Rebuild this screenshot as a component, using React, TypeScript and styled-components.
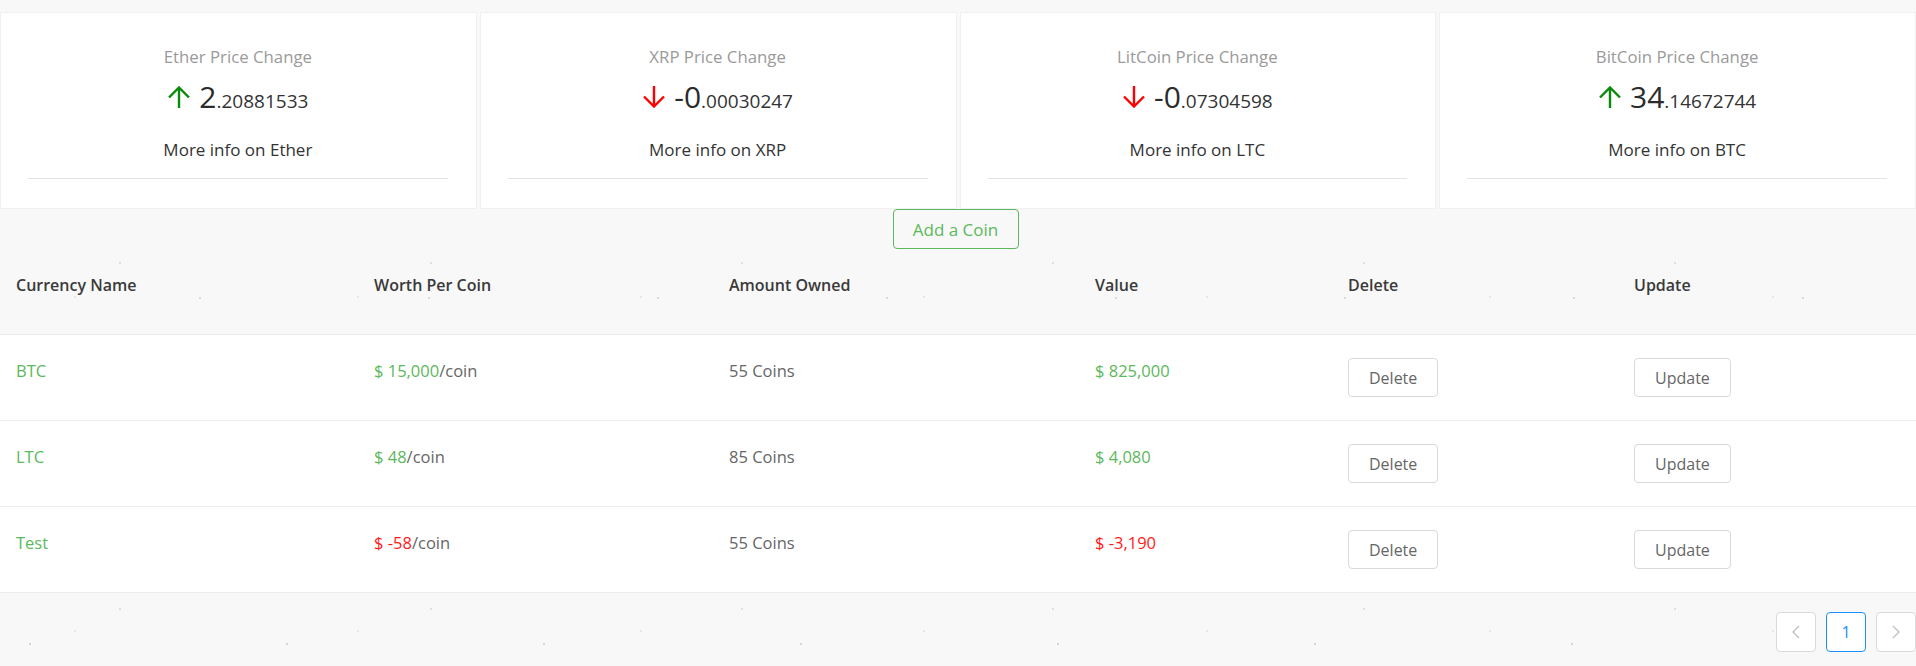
import React from 'react';
import styled, { createGlobalStyle } from 'styled-components';

const GlobalStyle = createGlobalStyle`
  body {
    margin: 0;
    font-family: 'Open Sans', 'Noto Sans', sans-serif;
    background-color: #f8f8f8;
    background-image:
      radial-gradient(circle at 30px 40px, rgba(0, 0, 0, 0.14) 0.8px, transparent 1.4px),
      radial-gradient(circle at 120px 90px, rgba(0, 0, 0, 0.1) 0.8px, transparent 1.4px),
      radial-gradient(circle at 200px 20px, rgba(0, 0, 0, 0.12) 0.8px, transparent 1.4px),
      radial-gradient(circle at 75px 130px, rgba(0, 0, 0, 0.08) 0.8px, transparent 1.4px);
    background-size: 257px 151px, 311px 173px, 229px 139px, 283px 167px;
  }
`;

type Trend = 'up' | 'down';

interface PriceCard {
  title: string;
  trend: Trend;
  int: string;
  dec: string;
  short: string;
}

interface CoinRow {
  name: string;
  worth: number;
  amount: number;
}

const cards: PriceCard[] = [
  { title: 'Ether Price Change', trend: 'up', int: '2', dec: '.20881533', short: 'Ether' },
  { title: 'XRP Price Change', trend: 'down', int: '-0', dec: '.00030247', short: 'XRP' },
  { title: 'LitCoin Price Change', trend: 'down', int: '-0', dec: '.07304598', short: 'LTC' },
  { title: 'BitCoin Price Change', trend: 'up', int: '34', dec: '.14672744', short: 'BTC' },
];

const coins: CoinRow[] = [
  { name: 'BTC', worth: 15000, amount: 55 },
  { name: 'LTC', worth: 48, amount: 85 },
  { name: 'Test', worth: -58, amount: 55 },
];

const fmt = (n: number) => n.toLocaleString('en-US');

const Arrow: React.FC<{ trend: Trend }> = ({ trend }) => (
  <ArrowSvg viewBox="0 0 24 22" $trend={trend}>
    {trend === 'up' ? (
      <path d="M12 22V2M2 11.5L12 1.5L22 11.5" />
    ) : (
      <path d="M12 0V20M2 10.5L12 20.5L22 10.5" />
    )}
  </ArrowSvg>
);

const App: React.FC = () => {
  return (
    <Page>
      <GlobalStyle />
      <CardGrid>
        {cards.map((c) => (
          <Card key={c.title}>
            <CardTitle>{c.title}</CardTitle>
            <StatValue>
              <Arrow trend={c.trend} />
              <IntPart>{c.int}</IntPart>
              <DecPart>{c.dec}</DecPart>
            </StatValue>
            <MoreInfo>More info on {c.short}</MoreInfo>
            <Divider />
          </Card>
        ))}
      </CardGrid>

      <Toolbar>
        <AddButton>Add a Coin</AddButton>
      </Toolbar>

      <Table>
        <HeadRow>
          <HeadCell>Currency Name</HeadCell>
          <HeadCell>Worth Per Coin</HeadCell>
          <HeadCell>Amount Owned</HeadCell>
          <HeadCell>Value</HeadCell>
          <HeadCell>Delete</HeadCell>
          <HeadCell>Update</HeadCell>
        </HeadRow>
        {coins.map((coin) => {
          const negative = coin.worth < 0;
          return (
            <BodyRow key={coin.name}>
              <Cell>
                <Money>{coin.name}</Money>
              </Cell>
              <Cell>
                <Money $negative={negative}>$ {fmt(coin.worth)}</Money>
                <Muted>/coin</Muted>
              </Cell>
              <Cell>
                <Muted>{coin.amount} Coins</Muted>
              </Cell>
              <Cell>
                <Money $negative={negative}>$ {fmt(coin.worth * coin.amount)}</Money>
              </Cell>
              <Cell>
                <RowButton>Delete</RowButton>
              </Cell>
              <Cell>
                <RowButton>Update</RowButton>
              </Cell>
            </BodyRow>
          );
        })}
      </Table>

      <Pager>
        <PageItem>
          <svg width="12" height="14" viewBox="0 0 12 14">
            <path d="M9 1L3 7L9 13" fill="none" stroke="#bfbfbf" strokeWidth="1.3" />
          </svg>
        </PageItem>
        <PageItem $active>1</PageItem>
        <PageItem>
          <svg width="12" height="14" viewBox="0 0 12 14">
            <path d="M3 1L9 7L3 13" fill="none" stroke="#bfbfbf" strokeWidth="1.3" />
          </svg>
        </PageItem>
      </Pager>
    </Page>
  );
};

export default App;

const Page = styled.div`
  padding-top: 12px;
  min-height: 654px;
`;

const CardGrid = styled.div`
  display: grid;
  grid-template-columns: repeat(4, 1fr);
  gap: 3px;
`;

const Card = styled.div`
  height: 197px;
  box-sizing: border-box;
  padding: 33px 28px 0 27px;
  background: #fff;
  border: 1px solid #f1f1f1;
  text-align: center;
`;

const CardTitle = styled.div`
  font-size: 16.8px;
  line-height: 22px;
  color: #9a9a9a;
`;

const StatValue = styled.div`
  display: flex;
  align-items: baseline;
  justify-content: center;
  margin-top: 9px;
  height: 40px;
  color: #2b2b2b;
`;

const ArrowSvg = styled.svg<{ $trend: Trend }>`
  width: 24px;
  height: 22px;
  margin-right: 8px;
  align-self: center;
  fill: none;
  stroke: ${({ $trend }) => ($trend === 'up' ? '#0a8a0a' : '#ff0000')};
  stroke-width: 2.4px;
`;

const IntPart = styled.span`
  font-size: 30px;
  line-height: 40px;
`;

const DecPart = styled.span`
  font-size: 19px;
  line-height: 40px;
  color: #333;
`;

const MoreInfo = styled.div`
  margin-top: 21px;
  font-size: 17px;
  line-height: 24px;
  color: #333;
`;

const Divider = styled.div`
  height: 1px;
  margin-top: 16px;
  background: #e3e3e3;
`;

const Toolbar = styled.div`
  display: flex;
  justify-content: center;
  padding-right: 5px;
`;

const AddButton = styled.button`
  width: 126px;
  height: 40px;
  padding: 0;
  font-family: inherit;
  font-size: 17px;
  color: #5cb85c;
  background: transparent;
  border: 1px solid #5cb85c;
  border-radius: 4px;
  cursor: pointer;
`;

const COLUMNS = '358px 355px 366px 253px 286px 1fr';

const Table = styled.div`
  display: flex;
  flex-direction: column;
`;

const HeadRow = styled.div`
  display: grid;
  grid-template-columns: ${COLUMNS};
  height: 86px;
  box-sizing: border-box;
  border-bottom: 1px solid #ececec;
`;

const HeadCell = styled.div`
  padding: 24px 16px 0;
  font-size: 16px;
  line-height: 24px;
  font-weight: 600;
  color: #3a3a3a;
`;

const BodyRow = styled.div`
  display: grid;
  grid-template-columns: ${COLUMNS};
  height: 86px;
  box-sizing: border-box;
  background: #fff;
  border-bottom: 1px solid #ececec;
`;

const Cell = styled.div`
  padding: 24px 16px 0;
  font-size: 16.5px;
  line-height: 24px;
`;

const Money = styled.span<{ $negative?: boolean }>`
  color: ${({ $negative }) => ($negative ? '#ff1a1a' : '#5cb85c')};
`;

const Muted = styled.span`
  color: #666;
`;

const RowButton = styled.button`
  margin-top: -1px;
  height: 39px;
  padding: 0 20px;
  font-family: inherit;
  font-size: 16px;
  color: #666;
  background: #fff;
  border: 1px solid #d9d9d9;
  border-radius: 4px;
  cursor: pointer;
`;

const Pager = styled.div`
  display: flex;
  justify-content: flex-end;
  gap: 10px;
  padding-top: 19px;
`;

const PageItem = styled.div<{ $active?: boolean }>`
  display: flex;
  align-items: center;
  justify-content: center;
  width: 40px;
  height: 40px;
  box-sizing: border-box;
  font-size: 16px;
  color: ${({ $active }) => ($active ? '#1890ff' : '#bfbfbf')};
  background: #fff;
  border: 1px solid ${({ $active }) => ($active ? '#1890ff' : '#d9d9d9')};
  border-radius: 4px;
`;
